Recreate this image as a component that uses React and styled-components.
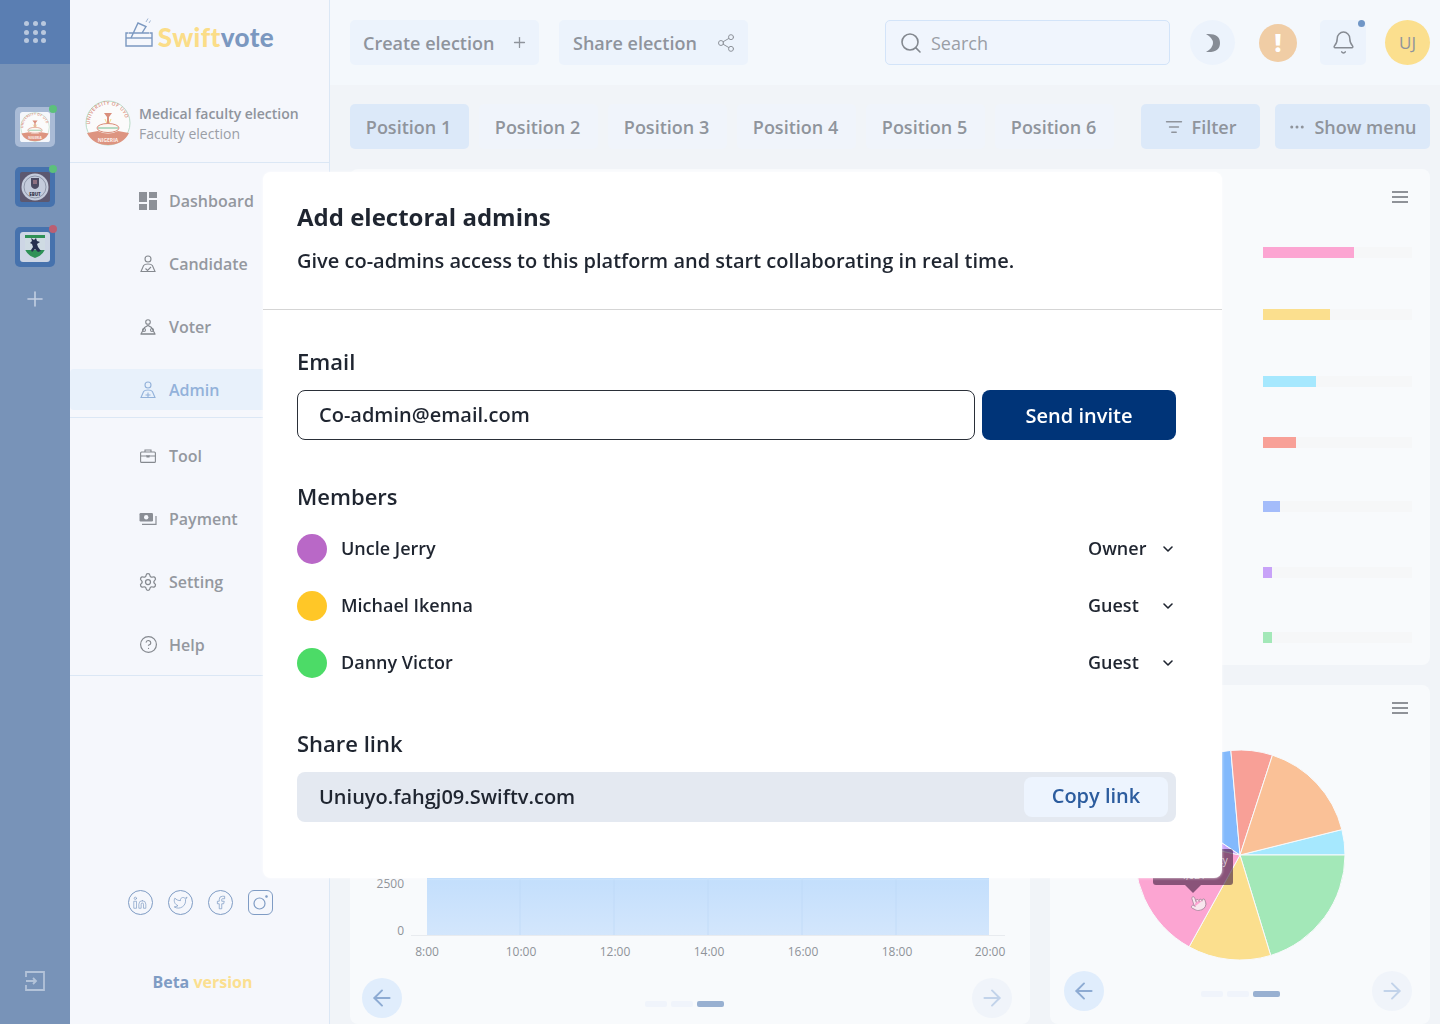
import React from 'react';
import styled, { createGlobalStyle } from 'styled-components';
import {
  Plus, Share2, Search, Bell, ListFilter, Ellipsis, Settings, CircleHelp, Linkedin, Twitter, Facebook,
  ArrowLeft, ArrowRight, ChevronDown, Pointer,
} from 'lucide-react';

const GlobalStyle = createGlobalStyle`
  html, body { margin: 0; padding: 0; }
  body { font-family: "Open Sans", "Noto Sans", sans-serif; background: #f1f4f8; }
  * { box-sizing: border-box; }
`;

const Page = styled.div`
  position: relative;
  display: flex;
  width: 1440px;
  height: 1024px;
  overflow: hidden;
  color: #8f949c;
`;

/* left rail */
const Rail = styled.aside`
  width: 70px;
  flex: none;
  display: flex;
  flex-direction: column;
  align-items: center;
  background: #7893b8;
`;
const RailTop = styled.div`
  width: 100%;
  height: 64px;
  display: grid;
  place-items: center;
  background: #5a7eb2;
`;
const DotGrid = styled.div`
  display: grid;
  grid-template-columns: repeat(3, 5px);
  gap: 3.6px;
  span { width: 5px; height: 5px; border-radius: 50%; background: #b9c8de; }
`;
const RailList = styled.div`
  display: flex;
  flex-direction: column;
  gap: 20px;
  margin-top: 43px;
`;
const RailTile = styled.div`
  position: relative;
  width: 40px;
  height: 40px;
  display: grid;
  place-items: center;
  border-radius: 5px;
  background: ${(p) => (p.$active ? '#a9bbd6' : '#4672ad')};
  svg { display: block; }
`;
const StatusDot = styled.span`
  position: absolute;
  top: -2px;
  right: -2px;
  width: 8px;
  height: 8px;
  border-radius: 50%;
  background: ${(p) => (p.$off ? '#bb5f72' : '#5cc07b')};
`;
const RailAdd = styled.div`
  margin-top: 20px;
  color: #c3d0e2;
  line-height: 0;
`;
const RailExit = styled.div`
  margin-top: auto;
  margin-bottom: 33px;
  line-height: 0;
`;

/* sidebar */
const Sidebar = styled.nav`
  width: 260px;
  flex: none;
  display: flex;
  flex-direction: column;
  background: #f5f7fc;
  border-right: 1px solid #dbe7f5;
`;
const LogoRow = styled.div`
  display: flex;
  align-items: flex-start;
  justify-content: center;
  gap: 5px;
  height: 34px;
  margin-top: 18px;
`;
const LogoWord = styled.span`
  font-family: "Lato", sans-serif;
  font-weight: 900;
  font-size: 26px;
  line-height: 34px;
  padding-top: 2px;
  letter-spacing: 0.4px;
  color: #7b98c0;
  b { font-weight: 900; color: #fbdd88; }
`;
const ElectionRow = styled.div`
  display: flex;
  align-items: center;
  gap: 8px;
  height: 65px;
  margin-top: 46px;
  padding: 0 0 15px 15px;
  border-bottom: 1px solid #dbe7f5;
  svg { flex: none; }
`;
const ElectionName = styled.div`
  padding-top: 2px;
  font-size: 14px;
  font-weight: 600;
  line-height: 20px;
  color: #8f949c;
  span { display: block; font-weight: 400; color: #9a9ea6; }
`;
const NavGroup = styled.div`
  display: flex;
  flex-direction: column;
  gap: 22px;
  padding: ${(p) => p.$pad};
  border-bottom: 1px solid #dbe7f5;
`;
const NavItem = styled.div`
  height: 41px;
  display: flex;
  align-items: center;
  gap: 11px;
  padding-left: 68px;
  font-size: 16px;
  font-weight: 600;
  border-radius: 4px;
  color: ${(p) => (p.$active ? '#93b2da' : '#94989f')};
  background: ${(p) => (p.$active ? '#e8f1fb' : 'transparent')};
`;
const NavIcon = styled.span`
  width: 20px;
  height: 20px;
  display: grid;
  place-items: center;
  flex: none;
  color: ${(p) => (p.$blue ? '#93b2da' : '#85898f')};
`;
const Socials = styled.div`
  display: flex;
  justify-content: center;
  gap: 15px;
  margin-top: auto;
  padding-left: 1px;
`;
const Social = styled.span`
  width: 25px;
  height: 25px;
  display: grid;
  place-items: center;
  color: #7f9cc4;
  border: 1px solid #7f9cc4;
  border-radius: ${(p) => (p.$square ? '6px' : '50%')};
`;
const BetaNote = styled.div`
  margin: 56px 0 31px;
  padding-left: 6px;
  text-align: center;
  font-size: 16px;
  line-height: 22px;
  font-weight: 700;
  color: #7f9cc4;
  span { color: #fbdf90; }
`;

/* header + content */
const Main = styled.main`
  flex: 1;
  min-width: 0;
  display: flex;
  flex-direction: column;
`;
const Header = styled.header`
  height: 85px;
  flex: none;
  display: flex;
  align-items: center;
  padding: 0 10px 0 20px;
  background: #f4f8fc;
`;
const HeaderBtn = styled.div`
  width: 189px;
  height: 45px;
  margin-right: 20px;
  display: flex;
  align-items: center;
  gap: ${(p) => p.$gap}px;
  padding-left: ${(p) => p.$left}px;
  border-radius: 5px;
  background: #ecf3fc;
  font-size: 18px;
  font-weight: 600;
  svg { flex: none; }
`;
const SearchBox = styled.div`
  width: 285px;
  height: 45px;
  margin-left: auto;
  display: flex;
  align-items: center;
  gap: 8px;
  padding-left: 13px;
  border: 1px solid #d3e4f9;
  border-radius: 5px;
  background: #f0f5fd;
  font-size: 18px;
  color: #9a9ea6;
`;
const MoonBtn = styled.div`
  width: 45px;
  height: 45px;
  margin-left: 20px;
  display: grid;
  place-items: center;
  border-radius: 50%;
  background: #ecf3fc;
`;
const AlertBadge = styled.div`
  width: 38px;
  height: 38px;
  margin-left: 24px;
  display: grid;
  place-items: center;
  border-radius: 50%;
  background: #f0cda5;
  color: #fff;
  font-size: 24px;
  font-weight: 800;
`;
const BellBtn = styled.div`
  position: relative;
  width: 46px;
  height: 45px;
  margin-left: 23px;
  display: grid;
  place-items: center;
  border-radius: 5px;
  background: #ecf3fc;
  color: #868b93;
`;
const BellDot = styled.span`
  position: absolute;
  top: 0;
  right: 1px;
  width: 7px;
  height: 7px;
  border-radius: 50%;
  background: #7096c6;
`;
const Avatar = styled.div`
  width: 45px;
  height: 45px;
  margin-left: 19px;
  display: grid;
  place-items: center;
  border-radius: 50%;
  background: #fbdf8e;
  font-size: 17px;
`;
const TabBar = styled.div`
  display: flex;
  align-items: center;
  gap: 10px;
  padding: 19px 10px 20px 20px;
`;
const Tab = styled.div`
  width: 119px;
  height: 45px;
  display: grid;
  place-items: center;
  padding-right: 2px;
  border-radius: 5px;
  font-size: 18px;
  font-weight: 600;
  background: ${(p) => (p.$active ? '#dce9f9' : '#f0f4fb')};
`;
const ActionBtn = styled.div`
  height: 45px;
  width: ${(p) => p.$w}px;
  margin-left: ${(p) => p.$ml};
  display: flex;
  align-items: center;
  justify-content: center;
  gap: ${(p) => p.$gap}px;
  border-radius: 5px;
  background: #dce9f9;
  font-size: 18px;
  font-weight: 600;
`;
const Content = styled.div`
  display: grid;
  grid-template-columns: 680px 380px;
  grid-template-rows: 496px 339px;
  gap: 20px;
  padding: 0 10px 0 20px;
`;
const Card = styled.section`
  position: relative;
  display: flex;
  flex-direction: column;
  border-radius: 8px;
  background: #f8fafc;
  grid-column: ${(p) => p.$span || 'auto'};
`;
const BurgerIcon = styled.div`
  align-self: flex-end;
  display: flex;
  flex-direction: column;
  gap: 3px;
  margin: ${(p) => p.$top}px 22px 0 0;
  span { width: 16px; height: 2px; background: #8f9298; }
`;
const BarList = styled.div`
  display: flex;
  flex-direction: column;
  align-items: flex-end;
  padding-right: 18px;
`;
const BarTrack = styled.div`
  width: 149px;
  height: 11px;
  margin-top: ${(p) => p.$gap}px;
  background: #f6f7f8;
`;
const BarFill = styled.div`
  height: 100%;
  background: ${(p) => p.$color};
`;
const PagerRow = styled.div`
  display: flex;
  align-items: center;
  justify-content: space-between;
  margin-top: auto;
  padding: ${(p) => p.$pad};
`;
const RoundArrow = styled.div`
  width: 40px;
  height: 40px;
  display: grid;
  place-items: center;
  border-radius: 50%;
  background: ${(p) => (p.$muted ? '#f0f4fa' : '#e0edfc')};
  color: ${(p) => (p.$muted ? '#c2d3ea' : '#8dabd3')};
`;
const Dots = styled.div`
  display: flex;
  gap: 4px;
  margin: ${(p) => p.$drop}px 0 0 ${(p) => p.$shift}px;
`;
const Dot = styled.span`
  height: 6px;
  border-radius: 2px;
  width: ${(p) => (p.$on ? 27 : 22)}px;
  background: ${(p) => (p.$on ? '#98b0d1' : '#f0f4fb')};
`;
const PieWrap = styled.div`
  position: relative;
  width: 220px;
  height: 220px;
  margin: 31px auto 0;
`;
const PieTip = styled.div`
  position: absolute;
  left: 23px;
  top: 104px;
  width: 80px;
  height: 36px;
  border-radius: 3px;
  background: rgba(66, 32, 66, 0.62);
  color: #d9cdd6;
  font-size: 10px;
  line-height: 15px;
  padding-top: 4px;
  text-align: center;
  white-space: nowrap;
  &::after {
    content: '';
    position: absolute;
    left: 32px;
    top: 36px;
    border: 8px solid transparent;
    border-bottom: 0;
    border-top-color: rgba(66, 32, 66, 0.62);
  }
`;
const PieCursor = styled.div`
  position: absolute;
  left: 59px;
  top: 149px;
  line-height: 0;
  color: #b58ea6;
  transform: rotate(-18deg);
`;

/* modal */
const Overlay = styled.div`
  position: absolute;
  inset: 0;
  padding: 172px 0 0 263px;
  backdrop-filter: blur(0.7px);
`;
const Modal = styled.div`
  width: 959px;
  height: 706px;
  border-radius: 8px;
  background: #fff;
  box-shadow: 0 0 3px rgba(255, 255, 255, 0.9);
  color: #1f2530;
`;
const ModalHead = styled.div`
  height: 138px;
  padding: 28px 34px 0;
  border-bottom: 1px solid #d5d5d5;
`;
const ModalTitle = styled.h2`
  margin: 0 0 13px;
  font-size: 24px;
  line-height: 33px;
  font-weight: 700;
`;
const ModalSub = styled.p`
  margin: 0;
  font-size: 20px;
  line-height: 30px;
  font-weight: 600;
`;
const ModalBody = styled.div`
  padding: 36px 46px 0 34px;
`;
const FieldLabel = styled.h3`
  margin: ${(p) => p.$top}px 0 0;
  font-size: 22px;
  line-height: 30px;
  font-weight: 600;
`;
const InviteRow = styled.div`
  display: flex;
  gap: 7px;
  margin-top: 14px;
`;
const EmailInput = styled.div`
  flex: 1;
  height: 50px;
  display: flex;
  align-items: center;
  padding: 0 0 2px 21px;
  border: 1px solid #2a2f38;
  border-radius: 8px;
  font-size: 20px;
  font-weight: 600;
`;
const SendBtn = styled.div`
  width: 194px;
  height: 50px;
  display: grid;
  place-items: center;
  border-radius: 8px;
  background: #003478;
  color: #fff;
  font-size: 20px;
  font-weight: 600;
`;
const MemberList = styled.div`
  display: flex;
  flex-direction: column;
  gap: 27px;
  margin-top: 23px;
`;
const MemberRow = styled.div`
  height: 30px;
  display: flex;
  align-items: center;
  font-size: 18px;
  font-weight: 600;
`;
const MemberDot = styled.span`
  width: 30px;
  height: 30px;
  margin-right: 14px;
  border-radius: 50%;
  background: ${(p) => p.$color};
`;
const MemberName = styled.span`
  margin-bottom: 2px;
`;
const RoleSelect = styled.div`
  width: 88px;
  margin-left: auto;
  display: flex;
  align-items: center;
  justify-content: space-between;
  span { margin-bottom: 2px; }
`;
const LinkBox = styled.div`
  height: 50px;
  margin-top: 14px;
  display: flex;
  align-items: center;
  justify-content: space-between;
  padding: 0 8px 0 22px;
  border-radius: 8px;
  background: #e4e9f1;
  font-size: 20px;
  font-weight: 600;
`;
const LinkText = styled.span`
  margin-bottom: 2px;
`;
const CopyBtn = styled.div`
  width: 144px;
  height: 40px;
  display: grid;
  place-items: center;
  padding-bottom: 3px;
  border-radius: 8px;
  background: #edf4fe;
  color: #2c5c9e;
`;

/* drawings */
const BallotLogo = () => (
  <svg width="28" height="29" viewBox="0 0 28 29" fill="none" stroke="#7b98c0" strokeWidth="1.4">
    <path d="M3.500 15H1v13h26V15h-2.500" />
    <path d="M1 20h26" />
    <path d="M6 20l7-15 8 3.500L17 15M4 15h20" />
    <path d="M21 4l2-3.500M24 5l1.500-2.500" strokeWidth="0.7" />
  </svg>
);

const UyoCrest = ({ size, pathId }) => (
  <svg width={size} height={size} viewBox="0 0 46 46">
    <rect width="46" height="46" rx="4" fill="#f5f7fb" />
    <circle cx="23" cy="23" r="22" fill="#fbfbfb" stroke="#b9dcc8" />
    <path id={pathId} d="M5.500 27A18 18 0 1 1 40.500 27" fill="none" />
    <text fontSize="5" fill="#d98e7c" fontWeight="600" letterSpacing="0.3">
      <textPath href={`#${pathId}`} startOffset="4%">UNIVERSITY OF UYO</textPath>
    </text>
    <path d="M19 13h8l-3 4v6h-2v-6z" fill="#d98e7c" />
    <path d="M20 19l3 7 3-7" fill="none" stroke="#f2dc8c" />
    <ellipse cx="23" cy="28" rx="11" ry="4.500" fill="#fdf7f2" stroke="#d98e7c" />
    <path d="M13 28h20" stroke="#9fd0b4" strokeWidth="1.500" />
    <path d="M2 33 13 31q10 5 20 0L44 33Q38 45 23 45T2 33z" fill="#dd9480" />
    <text x="23" y="42" fontSize="5" textAnchor="middle" fill="#fdf2ee" fontWeight="700">NIGERIA</text>
  </svg>
);

const EbutCrest = () => (
  <svg width="30" height="30" viewBox="0 0 30 30">
    <rect width="30" height="30" rx="2" fill="#5c5870" />
    <circle cx="15" cy="15" r="13.500" fill="#c4cbdc" />
    <circle cx="15" cy="15" r="11" fill="none" stroke="#6c7388" strokeWidth="0.6" />
    <path d="M11 6h8v7q0 3-4 4-4-1-4-4z" fill="#4c4a62" />
    <path d="M13 8h4v4h-4z" fill="#8e6f80" />
    <text x="15" y="24" fontSize="4.500" fontWeight="800" textAnchor="middle" fill="#3e3d52">EBUT</text>
  </svg>
);

const UnnCrest = () => (
  <svg width="30" height="30" viewBox="0 0 30 30">
    <rect width="30" height="30" rx="3" fill="#cdd6e5" />
    <path d="M5 3h20v14q-2 7-10 9Q7 24 5 17z" fill="#cfdbe3" />
    <path d="M5 3h20v3H5zM5.300 18h19.400Q22 24 15 26 8 24 5.300 18z" fill="#2f9157" />
    <path d="M11 6l3 2 2-2 1 3 3 1-3 2 1 3 3 4-3 1-3-3-3 3-1-2 2-3-1-3-2-1 2-2z" fill="#26304f" />
  </svg>
);

const DashIcon = () => (
  <svg width="18" height="18" viewBox="0 0 18 18" fill="#8d9198">
    <rect width="8" height="10" />
    <rect x="10" width="8" height="6" />
    <rect y="12" width="8" height="6" />
    <rect x="10" y="8" width="8" height="10" />
  </svg>
);
const PersonIcon = ({ mark }) => (
  <svg width="16" height="18" viewBox="0 0 16 18" fill="none" stroke="currentColor" strokeWidth="1.1">
    <circle cx="8" cy="4" r="3" />
    <path d="M1 16.500 3.600 10.500q1-1.500 4.400-1.500t4.400 1.500l2.600 6z" />
    {mark === 'plus' && <path d="M8 11.500v5M5.500 14h5" />}
    {mark === 'check' && <path d="M5.500 13.500 7.500 15.500 11 12" />}
  </svg>
);
const VoterIcon = () => (
  <svg width="18" height="18" viewBox="0 0 18 18" fill="none" stroke="currentColor" strokeWidth="1.1">
    <circle cx="9" cy="4" r="2.300" />
    <path d="M5.500 9.500 9 7.500l3.500 2 3.500 6.500H2z" />
    <circle cx="5" cy="12" r="1.500" />
    <circle cx="13" cy="12" r="1.500" />
    <path d="M2 16h14" />
  </svg>
);
const ToolIcon = () => (
  <svg width="16" height="14" viewBox="0 0 16 14" fill="none" stroke="currentColor" strokeWidth="1.1">
    <rect x="0.6" y="3" width="14.800" height="10.400" rx="1" />
    <path d="M5 3V1h6v2M0.6 7h14.800M7 6v2h2V6" />
  </svg>
);
const PayIcon = () => (
  <svg width="18" height="14" viewBox="0 0 18 14" fill="none">
    <rect x="0.5" y="1" width="13.500" height="8.500" rx="1.200" fill="#8a8e95" />
    <circle cx="7.200" cy="5.200" r="2.200" fill="#f5f7fc" />
    <path d="M17 4v8.400H3" stroke="#8a8e95" strokeWidth="1.200" />
  </svg>
);
const MoonIcon = () => (
  <svg width="16" height="20" viewBox="0 0 16 20">
    <path d="M1 1Q15 0 15 10T1 19Q8 15 8 10T1 1z" fill="#868c95" />
  </svg>
);
const ExitIcon = () => (
  <svg width="20" height="20" viewBox="0 0 20 20" fill="none" stroke="#b3c3d9" strokeWidth="1.800">
    <path d="M1 6V1h18v18H1v-5" />
    <path d="M1 10h10M8 7l3 3-3 3" />
  </svg>
);
const InstaIcon = () => (
  <svg width="18" height="18" viewBox="0 0 18 18" fill="none" stroke="currentColor" strokeWidth="1.200">
    <circle cx="8.500" cy="9.500" r="5.500" />
    <circle cx="15.500" cy="2.500" r="0.7" fill="currentColor" />
  </svg>
);

const polar = (cx, cy, r, deg) => {
  const a = (deg * Math.PI) / 180;
  return [cx + r * Math.cos(a), cy + r * Math.sin(a)];
};

const slices = [
  { from: -14, to: 0, color: '#a6e8fe' },
  { from: 0, to: 73, color: '#a3e8b8' },
  { from: 73, to: 119, color: '#fbdf8e' },
  { from: 119, to: 192, color: '#fca5d2' },
  { from: 192, to: 214, color: '#c8a2f8' },
  { from: 214, to: 265, color: '#82b9fc' },
  { from: 265, to: 288, color: '#f8a097' },
  { from: 288, to: 346, color: '#fac197' },
];

const PieChart = () => (
  <svg width="220" height="220" viewBox="0 0 220 220">
    {slices.map((s) => {
      const [x1, y1] = polar(110, 110, 105, s.from);
      const [x2, y2] = polar(110, 110, 105, s.to);
      return (
        <path
          key={s.from}
          d={`M110 110L${x1} ${y1}A105 105 0 0 1 ${x2} ${y2}Z`}
          fill={s.color}
          stroke="#f8fafc"
          strokeWidth="1"
        />
      );
    })}
  </svg>
);

const hours = [
  ['8:00', 77], ['10:00', 171], ['12:00', 265], ['14:00', 359], ['16:00', 453], ['18:00', 547], ['20:00', 640],
];

const AreaChart = () => (
  <svg width="680" height="275" viewBox="0 0 680 275" style={{ display: 'block' }}>
    <defs>
      <linearGradient id="areaFill" x1="0" y1="0" x2="0" y2="1">
        <stop offset="0" stopColor="#c2defc" />
        <stop offset="1" stopColor="#d3e6fc" />
      </linearGradient>
    </defs>
    <rect x="77" y="190" width="562" height="60" fill="url(#areaFill)" />
    <path d="M77 193.500h562" stroke="#a6cffb" strokeWidth="1" />
    {hours.slice(1, 6).map(([h, x]) => (
      <path key={h} d={`M${x - 1} 193v57`} stroke="#bcd8f8" strokeWidth="1" opacity="0.6" />
    ))}
    <path d="M61 250.500h594" stroke="#e8ebef" strokeWidth="1" />
    <g fontSize="12" fill="#8f9399" fontFamily="Open Sans, sans-serif">
      <text x="54" y="203" textAnchor="end">2500</text>
      <text x="54" y="250" textAnchor="end">0</text>
      {hours.map(([h, x]) => (
        <text key={h} x={x} y="271" textAnchor="middle">{h}</text>
      ))}
    </g>
  </svg>
);

const bars = [
  { color: '#fca5d2', width: 91, gap: 44 },
  { color: '#fbdf8e', width: 67, gap: 51 },
  { color: '#a6e8fe', width: 53, gap: 56 },
  { color: '#f8a097', width: 33, gap: 50 },
  { color: '#a4bcfa', width: 17, gap: 53 },
  { color: '#c8a2f8', width: 9, gap: 55 },
  { color: '#a3e8b8', width: 9, gap: 54 },
];

const members = [
  { name: 'Uncle Jerry', role: 'Owner', color: '#b968c7' },
  { name: 'Michael Ikenna', role: 'Guest', color: '#ffc727' },
  { name: 'Danny Victor', role: 'Guest', color: '#4cdb67' },
];

const Pager = ({ pad, drop, shift }) => (
  <PagerRow $pad={pad}>
    <RoundArrow><ArrowLeft size={26} strokeWidth={1.8} /></RoundArrow>
    <Dots $drop={drop} $shift={shift}><Dot /><Dot /><Dot $on /></Dots>
    <RoundArrow $muted><ArrowRight size={26} strokeWidth={1.8} /></RoundArrow>
  </PagerRow>
);

export default function App() {
  return (
    <Page>
      <GlobalStyle />
      <Rail>
        <RailTop>
          <DotGrid>{Array.from({ length: 9 }, (_, i) => <span key={i} />)}</DotGrid>
        </RailTop>
        <RailList>
          <RailTile $active><UyoCrest size={30} pathId="uyoRail" /><StatusDot /></RailTile>
          <RailTile><EbutCrest /><StatusDot /></RailTile>
          <RailTile><UnnCrest /><StatusDot $off /></RailTile>
        </RailList>
        <RailAdd><Plus size={24} strokeWidth={1.6} /></RailAdd>
        <RailExit><ExitIcon /></RailExit>
      </Rail>

      <Sidebar>
        <LogoRow>
          <BallotLogo />
          <LogoWord><b>Swift</b>vote</LogoWord>
        </LogoRow>
        <ElectionRow>
          <UyoCrest size={46} pathId="uyoSide" />
          <ElectionName>Medical faculty election<span>Faculty election</span></ElectionName>
        </ElectionRow>
        <NavGroup $pad="17px 0 7px">
          <NavItem><NavIcon><DashIcon /></NavIcon>Dashboard</NavItem>
          <NavItem><NavIcon><PersonIcon mark="check" /></NavIcon>Candidate</NavItem>
          <NavItem><NavIcon><VoterIcon /></NavIcon>Voter</NavItem>
          <NavItem $active><NavIcon $blue><PersonIcon mark="plus" /></NavIcon>Admin</NavItem>
        </NavGroup>
        <NavGroup $pad="17px 0 10px">
          <NavItem><NavIcon><ToolIcon /></NavIcon>Tool</NavItem>
          <NavItem><NavIcon><PayIcon /></NavIcon>Payment</NavItem>
          <NavItem><NavIcon><Settings size={20} strokeWidth={1.5} /></NavIcon>Setting</NavItem>
          <NavItem><NavIcon><CircleHelp size={19} strokeWidth={1.5} /></NavIcon>Help</NavItem>
        </NavGroup>
        <Socials>
          <Social><Linkedin size={14} strokeWidth={1.2} /></Social>
          <Social><Twitter size={15} strokeWidth={1.2} /></Social>
          <Social><Facebook size={15} strokeWidth={1.2} /></Social>
          <Social $square><InstaIcon /></Social>
        </Socials>
        <BetaNote>Beta <span>version</span></BetaNote>
      </Sidebar>

      <Main>
        <Header>
          <HeaderBtn $left={13} $gap={17}>Create election<Plus size={17} strokeWidth={1.8} /></HeaderBtn>
          <HeaderBtn $left={14} $gap={19}>Share election<Share2 size={20} strokeWidth={1.2} /></HeaderBtn>
          <SearchBox><Search size={24} strokeWidth={1.6} color="#83888f" />Search</SearchBox>
          <MoonBtn><MoonIcon /></MoonBtn>
          <AlertBadge>!</AlertBadge>
          <BellBtn><Bell size={25} strokeWidth={1.4} /><BellDot /></BellBtn>
          <Avatar>UJ</Avatar>
        </Header>
        <TabBar>
          {[1, 2, 3, 4, 5, 6].map((n) => (
            <Tab key={n} $active={n === 1}>Position {n}</Tab>
          ))}
          <ActionBtn $w={119} $ml="17px" $gap={9}><ListFilter size={18} strokeWidth={1.8} />Filter</ActionBtn>
          <ActionBtn $w={155} $ml="5px" $gap={8}><Ellipsis size={18} strokeWidth={2} />Show menu</ActionBtn>
        </TabBar>
        <Content>
          <Card $span="1 / 3">
            <BurgerIcon $top={22}><span /><span /><span /></BurgerIcon>
            <BarList>
              {bars.map((b) => (
                <BarTrack key={b.color} $gap={b.gap}>
                  <BarFill $color={b.color} style={{ width: b.width }} />
                </BarTrack>
              ))}
            </BarList>
          </Card>
          <Card>
            <AreaChart />
            <Pager pad="0 18px 6px 12px" drop={12} shift={-6} />
          </Card>
          <Card>
            <BurgerIcon $top={17}><span /><span /><span /></BurgerIcon>
            <PieWrap>
              <PieChart />
              <PieTip>Medical faculty<br />4,621</PieTip>
              <PieCursor><Pointer size={18} strokeWidth={1.2} fill="#f8e6ee" /></PieCursor>
            </PieWrap>
            <Pager pad="0 18px 13px 14px" drop={6} shift={4} />
          </Card>
        </Content>
      </Main>

      <Overlay>
        <Modal>
          <ModalHead>
            <ModalTitle>Add electoral admins</ModalTitle>
            <ModalSub>Give co-admins access to this platform and start collaborating in real time.</ModalSub>
          </ModalHead>
          <ModalBody>
            <FieldLabel $top={0}>Email</FieldLabel>
            <InviteRow>
              <EmailInput>Co-admin@email.com</EmailInput>
              <SendBtn>Send invite</SendBtn>
            </InviteRow>
            <FieldLabel $top={41}>Members</FieldLabel>
            <MemberList>
              {members.map((m) => (
                <MemberRow key={m.name}>
                  <MemberDot $color={m.color} />
                  <MemberName>{m.name}</MemberName>
                  <RoleSelect><span>{m.role}</span><ChevronDown size={16} strokeWidth={2.4} /></RoleSelect>
                </MemberRow>
              ))}
            </MemberList>
            <FieldLabel $top={50}>Share link</FieldLabel>
            <LinkBox>
              <LinkText>Uniuyo.fahgj09.Swiftv.com</LinkText>
              <CopyBtn>Copy link</CopyBtn>
            </LinkBox>
          </ModalBody>
        </Modal>
      </Overlay>
    </Page>
  );
}
